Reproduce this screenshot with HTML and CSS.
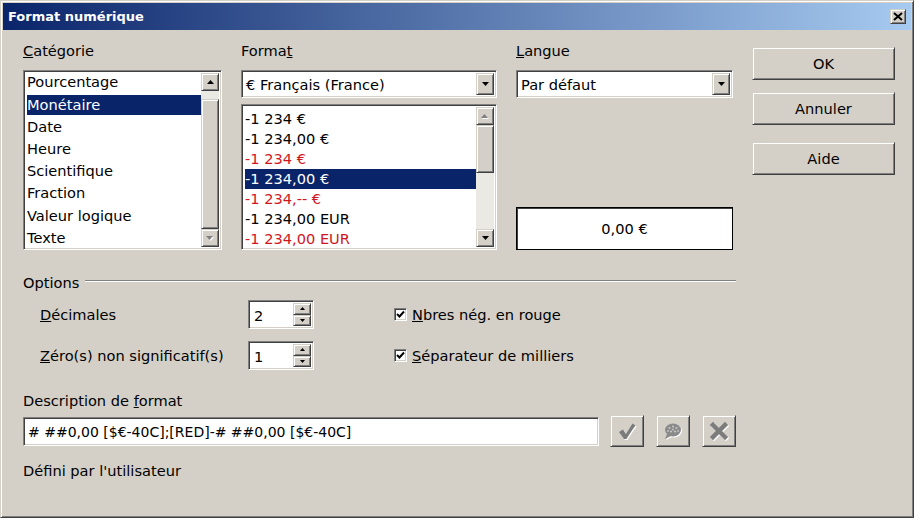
FILE: index.html
```html
<!DOCTYPE html>
<html lang="fr">
<head>
  <meta charset="UTF-8">
  <title>Format numérique</title>
  <link rel="stylesheet" href="styles.css">
</head>
<body>
  <div class="dialog">
    <div class="titlebar">
      <span class="title">Format numérique</span>
      <span class="close-btn">
        <svg width="10" height="9" viewBox="0 0 10 9"><path d="M1 1 L9 8 M9 1 L1 8" stroke="#000" stroke-width="2"/></svg>
      </span>
    </div>

    <div class="body">
      <div class="top">
        <div class="col">
          <div class="label"><u>C</u>atégorie</div>
          <div class="listbox cat-list">
            <ul class="items cat-items">
              <li>Pourcentage</li>
              <li class="selected">Monétaire</li>
              <li>Date</li>
              <li>Heure</li>
              <li>Scientifique</li>
              <li>Fraction</li>
              <li>Valeur logique</li>
              <li>Texte</li>
            </ul>
            <div class="scrollbar">
              <span class="sb-btn"><svg width="7" height="4" viewBox="0 0 7 4"><path d="M3.5 0 L7 4 L0 4 Z" fill="#000"/></svg></span>
              <span class="sb-track cat-gap-top"></span>
              <span class="sb-thumb cat-thumb"></span>
              <span class="sb-btn disabled"><svg width="8" height="5" viewBox="0 0 8 5"><path d="M1 1 L8 1 L4.5 5 Z" fill="#fff"/><path d="M0 0 L7 0 L3.5 4 Z" fill="#808080"/></svg></span>
            </div>
          </div>
        </div>

        <div class="col">
          <div class="label">Forma<u>t</u></div>
          <div class="combo">
            <span class="combo-text">€ Français (France)</span>
            <span class="drop-btn"><svg width="7" height="4" viewBox="0 0 7 4"><path d="M0 0 L7 0 L3.5 4 Z" fill="#000"/></svg></span>
          </div>
          <div class="listbox fmt-list">
            <ul class="items fmt-items">
              <li>-1 234 €</li>
              <li>-1 234,00 €</li>
              <li class="neg">-1 234 €</li>
              <li class="selected">-1 234,00 €</li>
              <li class="neg">-1 234,-- €</li>
              <li>-1 234,00 EUR</li>
              <li class="neg">-1 234,00 EUR</li>
            </ul>
            <div class="scrollbar">
              <span class="sb-btn disabled"><svg width="8" height="5" viewBox="0 0 8 5"><path d="M4.5 1 L8 5 L1 5 Z" fill="#fff"/><path d="M3.5 0 L7 4 L0 4 Z" fill="#808080"/></svg></span>
              <span class="sb-thumb fmt-thumb"></span>
              <span class="sb-track"></span>
              <span class="sb-btn"><svg width="7" height="4" viewBox="0 0 7 4"><path d="M0 0 L7 0 L3.5 4 Z" fill="#000"/></svg></span>
            </div>
          </div>
        </div>

        <div class="col">
          <div class="label"><u>L</u>angue</div>
          <div class="combo">
            <span class="combo-text">Par défaut</span>
            <span class="drop-btn"><svg width="7" height="4" viewBox="0 0 7 4"><path d="M0 0 L7 0 L3.5 4 Z" fill="#000"/></svg></span>
          </div>
          <div class="preview">0,00 €</div>
        </div>

        <div class="buttons">
          <button class="push">OK</button>
          <button class="push">Annuler</button>
          <button class="push">Aide</button>
        </div>
      </div>

      <div class="group-head">
        <span>Options</span>
        <span class="rule"></span>
      </div>

      <div class="options">
        <div class="opt-label"><u>D</u>écimales</div>
        <div class="spin">
          <span class="spin-value">2</span>
          <span class="spin-btns">
            <span class="spin-btn"><svg width="5" height="3" viewBox="0 0 5 3"><path d="M2.5 0 L5 3 L0 3 Z" fill="#000"/></svg></span>
            <span class="spin-btn"><svg width="5" height="3" viewBox="0 0 5 3"><path d="M0 0 L5 0 L2.5 3 Z" fill="#000"/></svg></span>
          </span>
        </div>
        <label class="check"><span class="box"><svg width="9" height="9" viewBox="0 0 9 9"><path d="M1 4 L3.5 6.5 L8 1.5" stroke="#000" stroke-width="2" fill="none"/></svg></span><span><u>N</u>bres nég. en rouge</span></label>

        <div class="opt-label"><u>Z</u>éro(s) non significatif(s)</div>
        <div class="spin">
          <span class="spin-value">1</span>
          <span class="spin-btns">
            <span class="spin-btn"><svg width="5" height="3" viewBox="0 0 5 3"><path d="M2.5 0 L5 3 L0 3 Z" fill="#000"/></svg></span>
            <span class="spin-btn"><svg width="5" height="3" viewBox="0 0 5 3"><path d="M0 0 L5 0 L2.5 3 Z" fill="#000"/></svg></span>
          </span>
        </div>
        <label class="check"><span class="box"><svg width="9" height="9" viewBox="0 0 9 9"><path d="M1 4 L3.5 6.5 L8 1.5" stroke="#000" stroke-width="2" fill="none"/></svg></span><span><u>S</u>éparateur de milliers</span></label>
      </div>

      <div class="label desc-label">Description de <u>f</u>ormat</div>
      <div class="desc-row">
        <div class="field">#&nbsp;##0,00 [$€-40C];[RED]-#&nbsp;##0,00 [$€-40C]</div>
        <span class="tool-btn">
          <svg width="22" height="22" viewBox="0 0 22 22">
            <path d="M3 12 L7 9.5 L10 14 L16.5 3.5 L19.5 5.5 C16 10 13 15 10.5 19 L8 19 Z" fill="#fff" transform="translate(1 1)"/>
            <path d="M3 12 L7 9.5 L10 14 L16.5 3.5 L19.5 5.5 C16 10 13 15 10.5 19 L8 19 Z" fill="#7c7c7c"/>
          </svg>
        </span>
        <span class="tool-btn">
          <svg width="22" height="22" viewBox="0 0 22 22">
            <g transform="translate(1 1)" fill="#fff"><ellipse cx="11" cy="10" rx="8" ry="6.5"/><path d="M5 14 L3 19 L10 15.5 Z"/></g>
            <g fill="#8a8a8a"><ellipse cx="11" cy="10" rx="8" ry="6.5"/><path d="M5 14 L3 19 L10 15.5 Z"/></g>
            <g fill="#c4c4c4"><circle cx="7.5" cy="8" r="1.1"/><circle cx="11" cy="6.5" r="1.1"/><circle cx="14.5" cy="8" r="1.1"/><circle cx="9" cy="11.5" r="1.1"/><circle cx="13" cy="11.5" r="1.1"/><circle cx="6" cy="11" r="0.9"/><circle cx="16" cy="11" r="0.9"/><circle cx="11" cy="9.5" r="0.9"/></g>
          </svg>
        </span>
        <span class="tool-btn">
          <svg width="22" height="22" viewBox="0 0 22 22">
            <path d="M5 5 L17 17 M17 5 L5 17" stroke="#fff" stroke-width="4.5" stroke-linecap="square" transform="translate(1 1)"/>
            <path d="M5 5 L17 17 M17 5 L5 17" stroke="#7c7c7c" stroke-width="4.5" stroke-linecap="square"/>
          </svg>
        </span>
      </div>

      <div class="label user-def">Défini par l'utilisateur</div>
    </div>
  </div>
</body>
</html>
```

FILE: styles.css
```css
body {
  margin: 0;
  background-color: #ffffff;
  font-family: "DejaVu Sans", Verdana, sans-serif;
  font-size: 14.6px;
  color: #000;
}
.dialog {
  width: 914px;
  height: 518px;
  box-sizing: border-box;
  background-color: #d4d0c8;
  border: 1px solid;
  border-color: #d4d0c8 #404040 #404040 #d4d0c8;
  box-shadow: inset 1px 1px 0 #fff, inset -1px -1px 0 #808080;
  padding: 2px;
}
.titlebar {
  height: 27px;
  background: linear-gradient(to right, #0a246a, #a6caf0);
  display: flex;
  align-items: center;
  justify-content: space-between;
  padding: 0 5px 0 5px;
}
.title {
  color: #fff;
  font-weight: bold;
  font-size: 13px;
}
.close-btn, .sb-btn, .sb-thumb, .drop-btn, .spin-btn, .push, .tool-btn {
  background-color: #d4d0c8;
  border: 1px solid;
  border-color: #d4d0c8 #404040 #404040 #d4d0c8;
  box-shadow: inset 1px 1px 0 #fff, inset -1px -1px 0 #808080;
  box-sizing: border-box;
}
.close-btn {
  width: 16px;
  height: 15px;
  display: flex;
  align-items: center;
  justify-content: center;
}
.body {
  padding: 12px 0 0 20px;
}
.top {
  display: grid;
  grid-template-columns: 199px 256px 217px 143px;
  column-gap: 19px;
  height: 208px;
}
.col {
  display: flex;
  flex-direction: column;
}
.label {
  line-height: 17px;
  height: 17px;
  margin-bottom: 11px;
  white-space: nowrap;
}
.listbox, .combo, .spin, .field, .box {
  background-color: #fff;
  border: 1px solid;
  border-color: #808080 #fff #fff #808080;
  box-shadow: inset 1px 1px 0 #404040, inset -1px -1px 0 #d4d0c8;
  box-sizing: border-box;
}
.listbox {
  display: flex;
  padding: 2px;
  overflow: hidden;
}
.items {
  list-style: none;
  margin: 0;
  padding: 0;
  flex: 1;
  overflow: hidden;
}
.items li {
  height: 22px;
  line-height: 22px;
  padding-left: 1px;
  white-space: nowrap;
}
.cat-items {
  margin-top: -2px;
}
.cat-items li {
  height: 22.3px;
  line-height: 22.3px;
}
.items li.selected {
  background-color: #0a246a;
  color: #fff;
  background-clip: content-box;
  padding-top: 2px;
  padding-bottom: 1px;
  height: 19.3px;
  line-height: 19.3px;
}
.cat-list {
  height: 180px;
}
.fmt-list {
  height: 146px;
  margin-top: 6px;
}
.fmt-items {
  padding-top: 2px;
}
.fmt-items li {
  height: 20px;
  line-height: 20px;
}
.fmt-items li.selected {
  padding-top: 0;
  padding-bottom: 0;
  height: 20px;
  line-height: 20px;
}
.items li.neg {
  color: #d0161e;
}
.scrollbar {
  width: 18px;
  display: flex;
  flex-direction: column;
  background-color: #ebe9e4;
}
.sb-btn {
  height: 18px;
  flex: none;
  display: flex;
  align-items: center;
  justify-content: center;
}
.sb-track {
  flex: 1;
}
.cat-gap-top {
  flex: none;
  height: 8px;
}
.cat-thumb {
  flex: 1;
}
.fmt-thumb {
  height: 48px;
  flex: none;
}
.combo {
  height: 28px;
  display: flex;
  align-items: center;
  padding: 2px;
}
.combo-text {
  flex: 1;
  padding-left: 2px;
  white-space: nowrap;
}
.drop-btn {
  width: 18px;
  height: 22px;
  display: flex;
  align-items: center;
  justify-content: center;
}
.preview {
  margin-top: auto;
  height: 43px;
  border: 1px solid #000;
  box-shadow: inset 1px 1px 0 #404040;
  background-color: #fff;
  display: flex;
  align-items: center;
  justify-content: center;
  box-sizing: border-box;
}
.buttons {
  display: flex;
  flex-direction: column;
  padding-top: 5px;
}
.push {
  height: 33px;
  font-family: inherit;
  font-size: 14.6px;
  color: #000;
  margin-bottom: 12px;
}
.push + .push + .push {
  margin-top: 5px;
}
.group-head {
  display: flex;
  align-items: center;
  margin-top: 24px;
  width: 713px;
  line-height: 17px;
}
.rule {
  flex: 1;
  height: 0;
  border-top: 1px solid #808080;
  border-bottom: 1px solid #fff;
  margin-left: 6px;
  margin-top: -3px;
}
.options {
  display: grid;
  grid-template-columns: 208px 66px auto;
  row-gap: 12px;
  align-items: center;
  padding-left: 17px;
  margin-top: 9px;
}
.opt-label {
  white-space: nowrap;
}
.spin {
  height: 29px;
  display: flex;
  padding: 2px;
}
.spin-value {
  flex: 1;
  line-height: 25px;
  padding-left: 3px;
}
.spin-btns {
  width: 18px;
  display: flex;
  flex-direction: column;
}
.spin-btn {
  flex: 1;
  display: flex;
  align-items: center;
  justify-content: center;
}
.check {
  display: flex;
  align-items: center;
  gap: 5px;
  margin-left: 80px;
}
.box {
  width: 13px;
  height: 13px;
  display: flex;
  align-items: center;
  justify-content: center;
}
.desc-label {
  margin-top: 22px;
  margin-bottom: 6px;
}
.desc-row {
  display: flex;
  align-items: center;
}
.field {
  width: 576px;
  height: 29px;
  line-height: 25px;
  padding: 2px 4px;
  margin-right: 11px;
  font-size: 14px;
  white-space: nowrap;
}
.tool-btn {
  width: 34px;
  height: 32px;
  margin-right: 12px;
  display: flex;
  align-items: center;
  justify-content: center;
}
.user-def {
  margin-top: 15px;
}
```
